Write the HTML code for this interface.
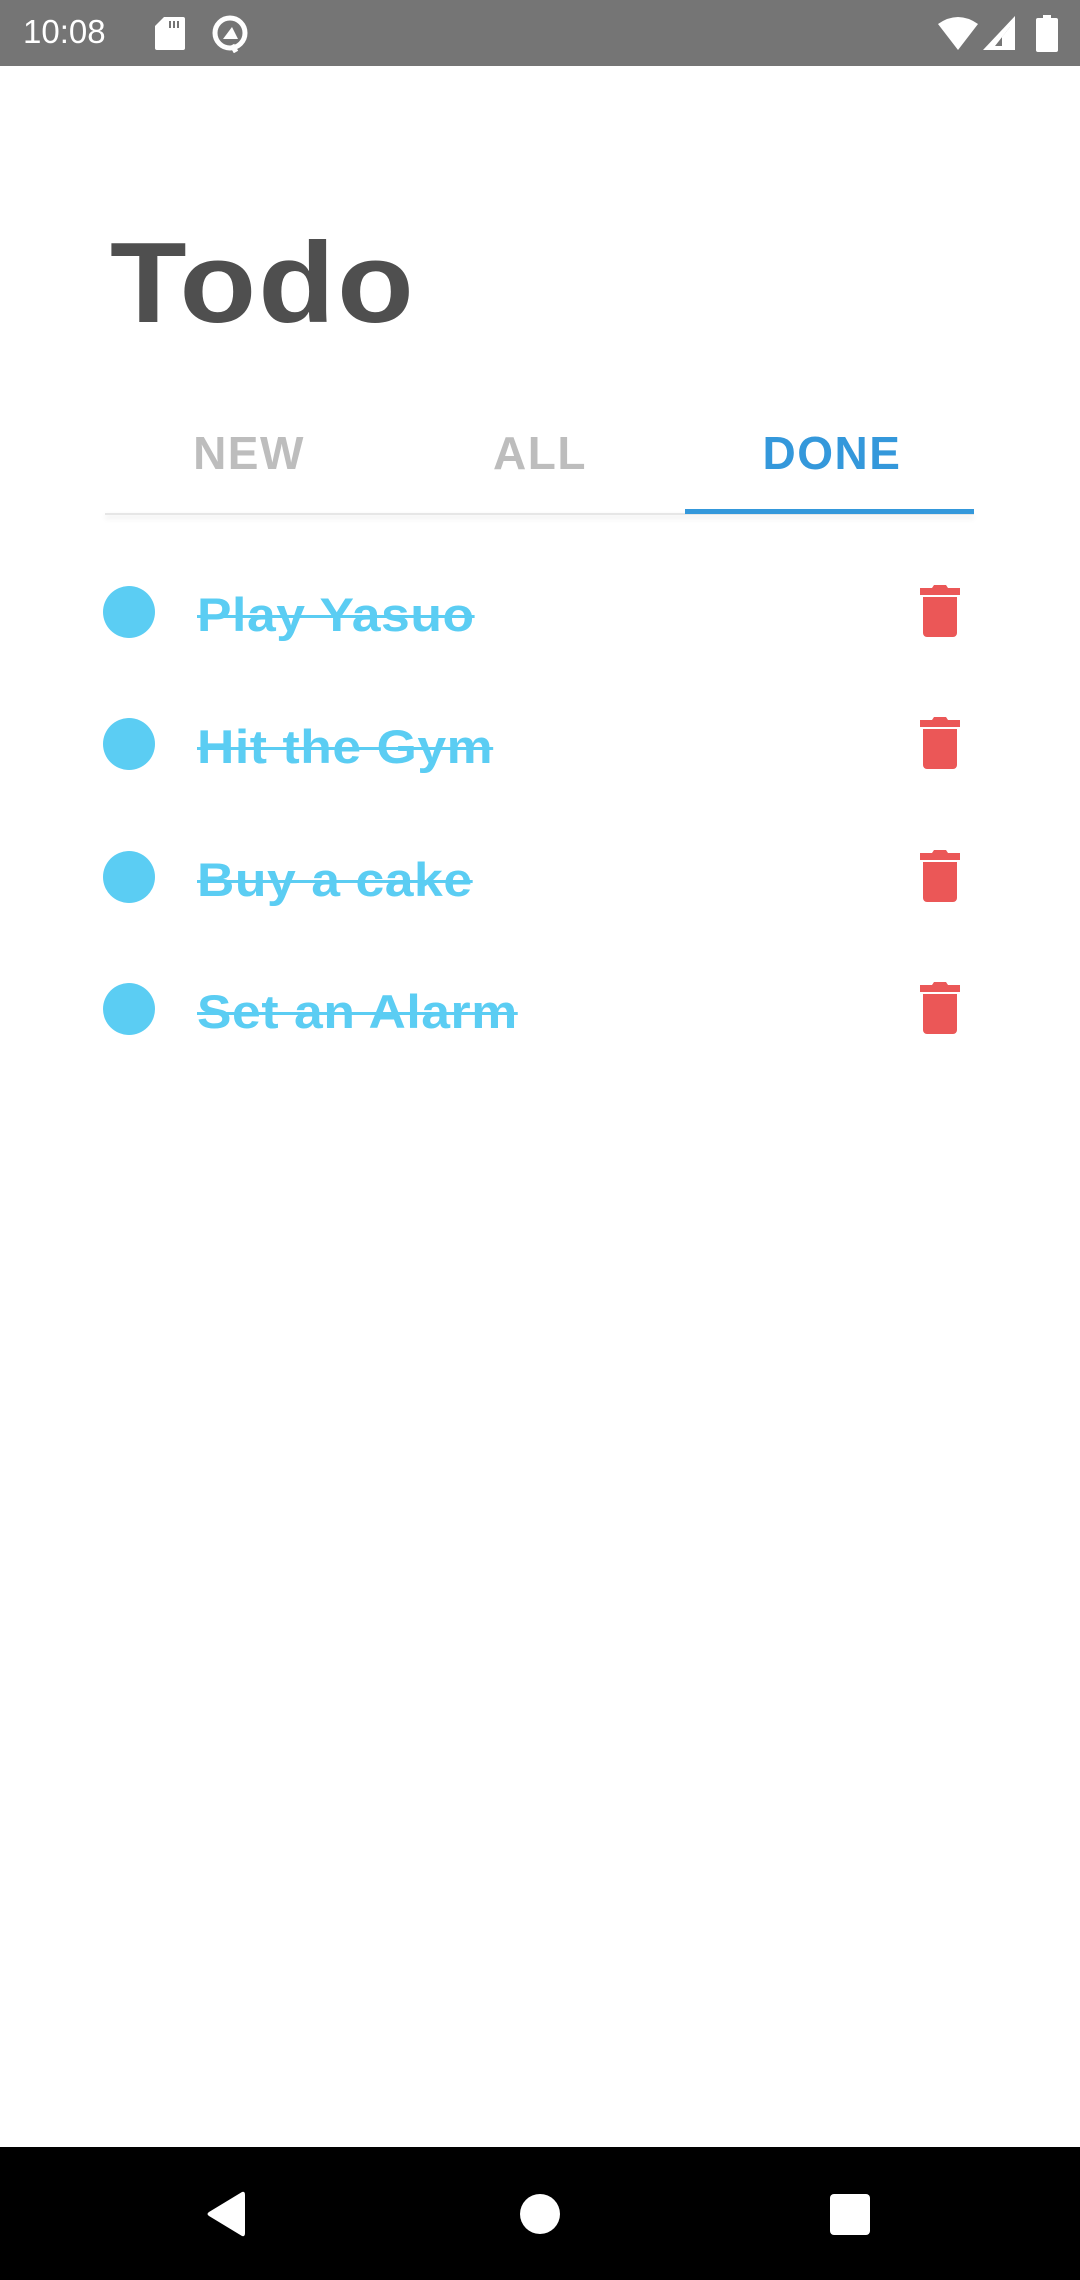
<!DOCTYPE html>
<html><head><meta charset="utf-8"><style>
*{margin:0;padding:0;box-sizing:border-box}
body{width:1080px;height:2280px;background:#fff;position:relative;overflow:hidden;font-family:"Liberation Sans",sans-serif}
.sb{position:absolute;left:0;top:0;width:1080px;height:66px;background:#757575;color:#fff}
.time{position:absolute;left:23px;top:13px;font-size:33px}
.title{position:absolute;left:110px;top:218px;font-size:114px;font-weight:bold;color:#4f4f4f;letter-spacing:2px;transform:scaleX(1.1);transform-origin:0 0}
.tab{position:absolute;top:426px;width:290px;text-align:center;font-size:46px;font-weight:bold;color:#bdbdbd;letter-spacing:1.5px}
.line{position:absolute;left:105px;top:513px;width:869px;height:2px;background:#e6e6e6;box-shadow:0 3px 6px rgba(0,0,0,0.12)}
.ind{position:absolute;left:685px;top:509px;width:289px;height:5px;background:#3498db}
.dot{position:absolute;left:103px;width:52px;height:52px;border-radius:50%;background:#5bcdf3}
.txt{position:absolute;left:197px;font-size:47px;font-weight:bold;color:#5bcdf3;text-decoration:line-through;text-decoration-thickness:3px;letter-spacing:0.5px;line-height:60px;transform:scaleX(1.1);transform-origin:0 0}
.tr{position:absolute;left:918px}
.nav{position:absolute;left:0;top:2147px;width:1080px;height:133px;background:#000}
</style></head><body>
<div class="sb"><div class="time">10:08</div>
<svg style="position:absolute;left:155px;top:17px" width="30" height="33" viewBox="0 0 30 33"><path d="M9 0H28a2 2 0 0 1 2 2V31a2 2 0 0 1-2 2H2a2 2 0 0 1-2-2V9z" fill="#fff"/><rect x="14" y="4" width="2" height="7" fill="#757575"/><rect x="18" y="4" width="2" height="7" fill="#757575"/><rect x="22" y="4" width="2" height="7" fill="#757575"/></svg>
<svg style="position:absolute;left:210px;top:15px" width="40" height="38" viewBox="0 0 40 38"><circle cx="20" cy="18" r="15" fill="none" stroke="#fff" stroke-width="5"/><path d="M13 24 L22 12 L28 24 Z" fill="#fff"/><path d="M22 30 L26 37" stroke="#fff" stroke-width="5"/></svg>
<svg style="position:absolute;left:938px;top:16px" width="40" height="34" viewBox="0 0 40 34"><path d="M0 8 Q20 -6 40 8 L20 34 Z" fill="#fff"/></svg>
<svg style="position:absolute;left:983px;top:16px" width="32" height="34" viewBox="0 0 32 34"><path d="M32 0V34H0Z" fill="#fff"/><path d="M27 11V30H12Z" fill="#757575"/><path d="M27 11V30H19V21Z" fill="#fff"/></svg>
<svg style="position:absolute;left:1036px;top:15px" width="22" height="37" viewBox="0 0 22 37"><rect x="7" y="0" width="8" height="4" fill="#fff"/><rect x="0" y="3" width="22" height="34" rx="2" fill="#fff"/></svg>
</div>
<div class="title">Todo</div>
<div class="tab" style="left:104px">NEW</div>
<div class="tab" style="left:395px">ALL</div>
<div class="tab" style="left:687px;color:#3498db">DONE</div>
<div class="line"></div><div class="ind"></div>

<div class="dot" style="top:586px"></div><div class="txt" style="top:585px">Play Yasuo</div>
<div class="dot" style="top:718px"></div><div class="txt" style="top:717px">Hit the Gym</div>
<div class="dot" style="top:851px"></div><div class="txt" style="top:850px">Buy a cake</div>
<div class="dot" style="top:983px"></div><div class="txt" style="top:982px">Set an Alarm</div>

<svg class="tr" style="top:584px" width="44" height="54" viewBox="0 0 44 54"><path d="M14 4 L16 1 H28 L30 4 H42 V11 H2 V4 Z" fill="#eb5757"/><path d="M5 13 H39 V49 a4 4 0 0 1-4 4 H9 a4 4 0 0 1-4-4Z" fill="#eb5757"/></svg>
<svg class="tr" style="top:716px" width="44" height="54" viewBox="0 0 44 54"><path d="M14 4 L16 1 H28 L30 4 H42 V11 H2 V4 Z" fill="#eb5757"/><path d="M5 13 H39 V49 a4 4 0 0 1-4 4 H9 a4 4 0 0 1-4-4Z" fill="#eb5757"/></svg>
<svg class="tr" style="top:849px" width="44" height="54" viewBox="0 0 44 54"><path d="M14 4 L16 1 H28 L30 4 H42 V11 H2 V4 Z" fill="#eb5757"/><path d="M5 13 H39 V49 a4 4 0 0 1-4 4 H9 a4 4 0 0 1-4-4Z" fill="#eb5757"/></svg>
<svg class="tr" style="top:981px" width="44" height="54" viewBox="0 0 44 54"><path d="M14 4 L16 1 H28 L30 4 H42 V11 H2 V4 Z" fill="#eb5757"/><path d="M5 13 H39 V49 a4 4 0 0 1-4 4 H9 a4 4 0 0 1-4-4Z" fill="#eb5757"/></svg>

<div class="nav">
<svg style="position:absolute;left:204px;top:43px" width="44" height="48" viewBox="0 0 44 48"><path d="M38 2 Q41 1 41 5 V43 Q41 47 38 46 L5 26 Q2 24 5 22 Z" fill="#fff"/></svg>
<div style="position:absolute;left:520px;top:47px;width:40px;height:40px;border-radius:50%;background:#fff"></div>
<div style="position:absolute;left:830px;top:47px;width:40px;height:41px;border-radius:4px;background:#fff"></div>
</div>
</body></html>
